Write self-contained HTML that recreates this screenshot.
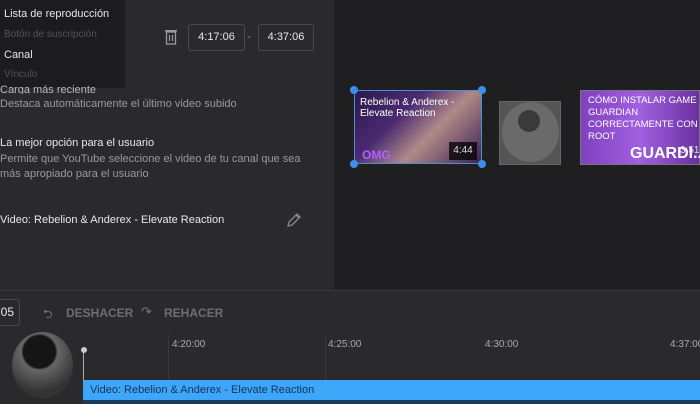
<!DOCTYPE html>
<html><head><meta charset="utf-8"><style>
*{margin:0;padding:0;box-sizing:border-box}
body{width:700px;height:404px;overflow:hidden;background:#2a2a2c;font-family:"Liberation Sans",sans-serif;color:#e8e8e8;position:relative}
.abs{position:absolute}
.t{font-size:11px;white-space:nowrap}
.g{color:#9a9a9a}
</style></head><body>
<div class="abs" style="left:334px;top:0;width:366px;height:290px;background:#1f1f21"></div>
<div class="abs" style="left:0;top:290px;width:700px;height:1px;background:#3a3a3c"></div>

<div class="abs" style="left:0;top:0;width:125px;height:88px;background:#1c1c1e"></div>
<div class="abs t" style="left:4px;top:8px;color:#e6e6e6">Lista de reproducción</div>
<div class="abs t" style="left:4px;top:29px;color:#555;font-size:10px">Botón de suscripción</div>
<div class="abs t" style="left:4px;top:49px;color:#e6e6e6">Canal</div>
<div class="abs t" style="left:4px;top:69px;color:#555;font-size:10px">Vínculo</div>

<div class="abs t" style="left:0;top:84px;color:#bbb;height:10px;overflow:hidden">Carga más reciente</div>
<div class="abs t g" style="left:0;top:98px">Destaca automáticamente el último video subido</div>
<div class="abs t" style="left:0;top:137px">La mejor opción para el usuario</div>
<div class="abs t g" style="left:0;top:153px">Permite que YouTube seleccione el video de tu canal que sea</div>
<div class="abs t g" style="left:0;top:168px">más apropiado para el usuario</div>
<div class="abs t" style="left:0;top:214px">Video: Rebelion &amp; Anderex - Elevate Reaction</div>
<svg class="abs" style="left:285px;top:211px" width="18" height="18" viewBox="0 0 18 18"><path d="M3 15l1-4 8-8 3 3-8 8z M11 4l3 3" fill="none" stroke="#888" stroke-width="1.3"/></svg>

<svg class="abs" style="left:165px;top:29px" width="12" height="16" viewBox="0 0 12 16"><rect x="1.5" y="3" width="9" height="12" fill="none" stroke="#999" stroke-width="1.3"/><rect x="0" y="1" width="12" height="1.5" fill="#999"/><path d="M4.5 6v6M7.5 6v6" stroke="#999" stroke-width="1.2"/></svg>
<div class="abs t" style="left:188px;top:24px;width:57px;height:27px;border:1px solid #4a4a4c;border-radius:3px;text-align:center;line-height:25px">4:17:06</div>
<div class="abs t g" style="left:247px;top:31px">-</div>
<div class="abs t" style="left:258px;top:24px;width:56px;height:27px;border:1px solid #4a4a4c;border-radius:3px;text-align:center;line-height:25px">4:37:06</div>

<div class="abs" style="left:354px;top:90px;width:128px;height:74px;background:linear-gradient(135deg,#2a1a4a,#4a2a70 35%,#b08a88 60%,#3a2050);border:1px solid #4a8fd8"></div>
<div class="abs" style="left:360px;top:97px;font-size:10px;color:#fff;line-height:11px">Rebelion &amp; Anderex -<br>Elevate Reaction</div>
<div class="abs" style="left:362px;top:148px;font-size:12px;font-weight:bold;color:#b060ff">OMG</div>
<div class="abs" style="left:449px;top:142px;width:28px;height:18px;background:rgba(0,0,0,.75);font-size:10px;color:#ddd;text-align:center;line-height:18px">4:44</div>
<div class="abs" style="left:350px;top:86px;width:8px;height:8px;border-radius:50%;background:#3b8fe8"></div>
<div class="abs" style="left:478px;top:86px;width:8px;height:8px;border-radius:50%;background:#3b8fe8"></div>
<div class="abs" style="left:350px;top:160px;width:8px;height:8px;border-radius:50%;background:#3b8fe8"></div>
<div class="abs" style="left:478px;top:160px;width:8px;height:8px;border-radius:50%;background:#3b8fe8"></div>

<div class="abs" style="left:499px;top:101px;width:62px;height:64px;background:#555;border:1px solid #666"></div>
<div class="abs" style="left:502px;top:102px;width:57px;height:60px;border-radius:50%;background:#6a6a6a"></div>
<div class="abs" style="left:518px;top:110px;width:22px;height:22px;border-radius:50%;background:#3a3a3a"></div>

<div class="abs" style="left:580px;top:90px;width:120px;height:75px;background:linear-gradient(90deg,#8040c0,#a060e0 50%,#6a30a0);border:1px solid #777"></div>
<div class="abs" style="left:588px;top:95px;font-size:9.5px;color:#fff;line-height:12px;white-space:nowrap">CÓMO INSTALAR GAME<br>GUARDIAN<br>CORRECTAMENTE CON<br>ROOT</div>
<div class="abs" style="left:630px;top:145px;font-size:16px;font-weight:bold;color:#fff;white-space:nowrap">GUARDI...</div>
<div class="abs" style="left:680px;top:145px;font-size:10px;color:#ddd">3:51</div>

<div class="abs t" style="left:-4px;top:299px;width:24px;height:27px;border:1px solid #4a4a4c;border-radius:3px;line-height:25px;text-align:right;padding-right:5px;font-size:12px">05</div>
<div class="abs t" style="left:43px;top:305px;font-size:12px;color:#777">&#x2B8C;</div>
<div class="abs t" style="left:66px;top:306px;font-size:12px;font-weight:bold;color:#6f6f6f">DESHACER</div>
<div class="abs t" style="left:141px;top:304px;font-size:13px;color:#777">&#8631;</div>
<div class="abs t" style="left:164px;top:306px;font-size:12px;font-weight:bold;color:#6f6f6f">REHACER</div>

<div class="abs" style="left:12px;top:332px;width:61px;height:66px;border-radius:50%;background:radial-gradient(circle at 45% 30%,#151515 28%,#666 32%,#333 70%)"></div>
<div class="abs" style="left:81px;top:347px;width:6px;height:6px;border-radius:50%;background:#ccc"></div>
<div class="abs" style="left:83px;top:352px;width:1px;height:52px;background:#aaa"></div>
<div class="abs" style="left:168px;top:335px;width:1px;height:45px;background:#3a3a3c"></div>
<div class="abs" style="left:325px;top:335px;width:1px;height:45px;background:#3a3a3c"></div>
<div class="abs t g" style="left:172px;top:339px;font-size:10px;color:#aaa">4:20:00</div>
<div class="abs t g" style="left:328px;top:339px;font-size:10px;color:#aaa">4:25:00</div>
<div class="abs t g" style="left:485px;top:339px;font-size:10px;color:#aaa">4:30:00</div>
<div class="abs t g" style="left:670px;top:339px;font-size:10px;color:#aaa">4:37:00</div>
<div class="abs" style="left:83px;top:380px;width:617px;height:20px;background:#3ea6f8"></div>
<div class="abs" style="left:83px;top:400px;width:617px;height:4px;background:#1a3a5a"></div>
<div class="abs t" style="left:90px;top:384px;color:#10355a;font-size:11px">Video: Rebelion &amp; Anderex - Elevate Reaction</div>
</body></html>
